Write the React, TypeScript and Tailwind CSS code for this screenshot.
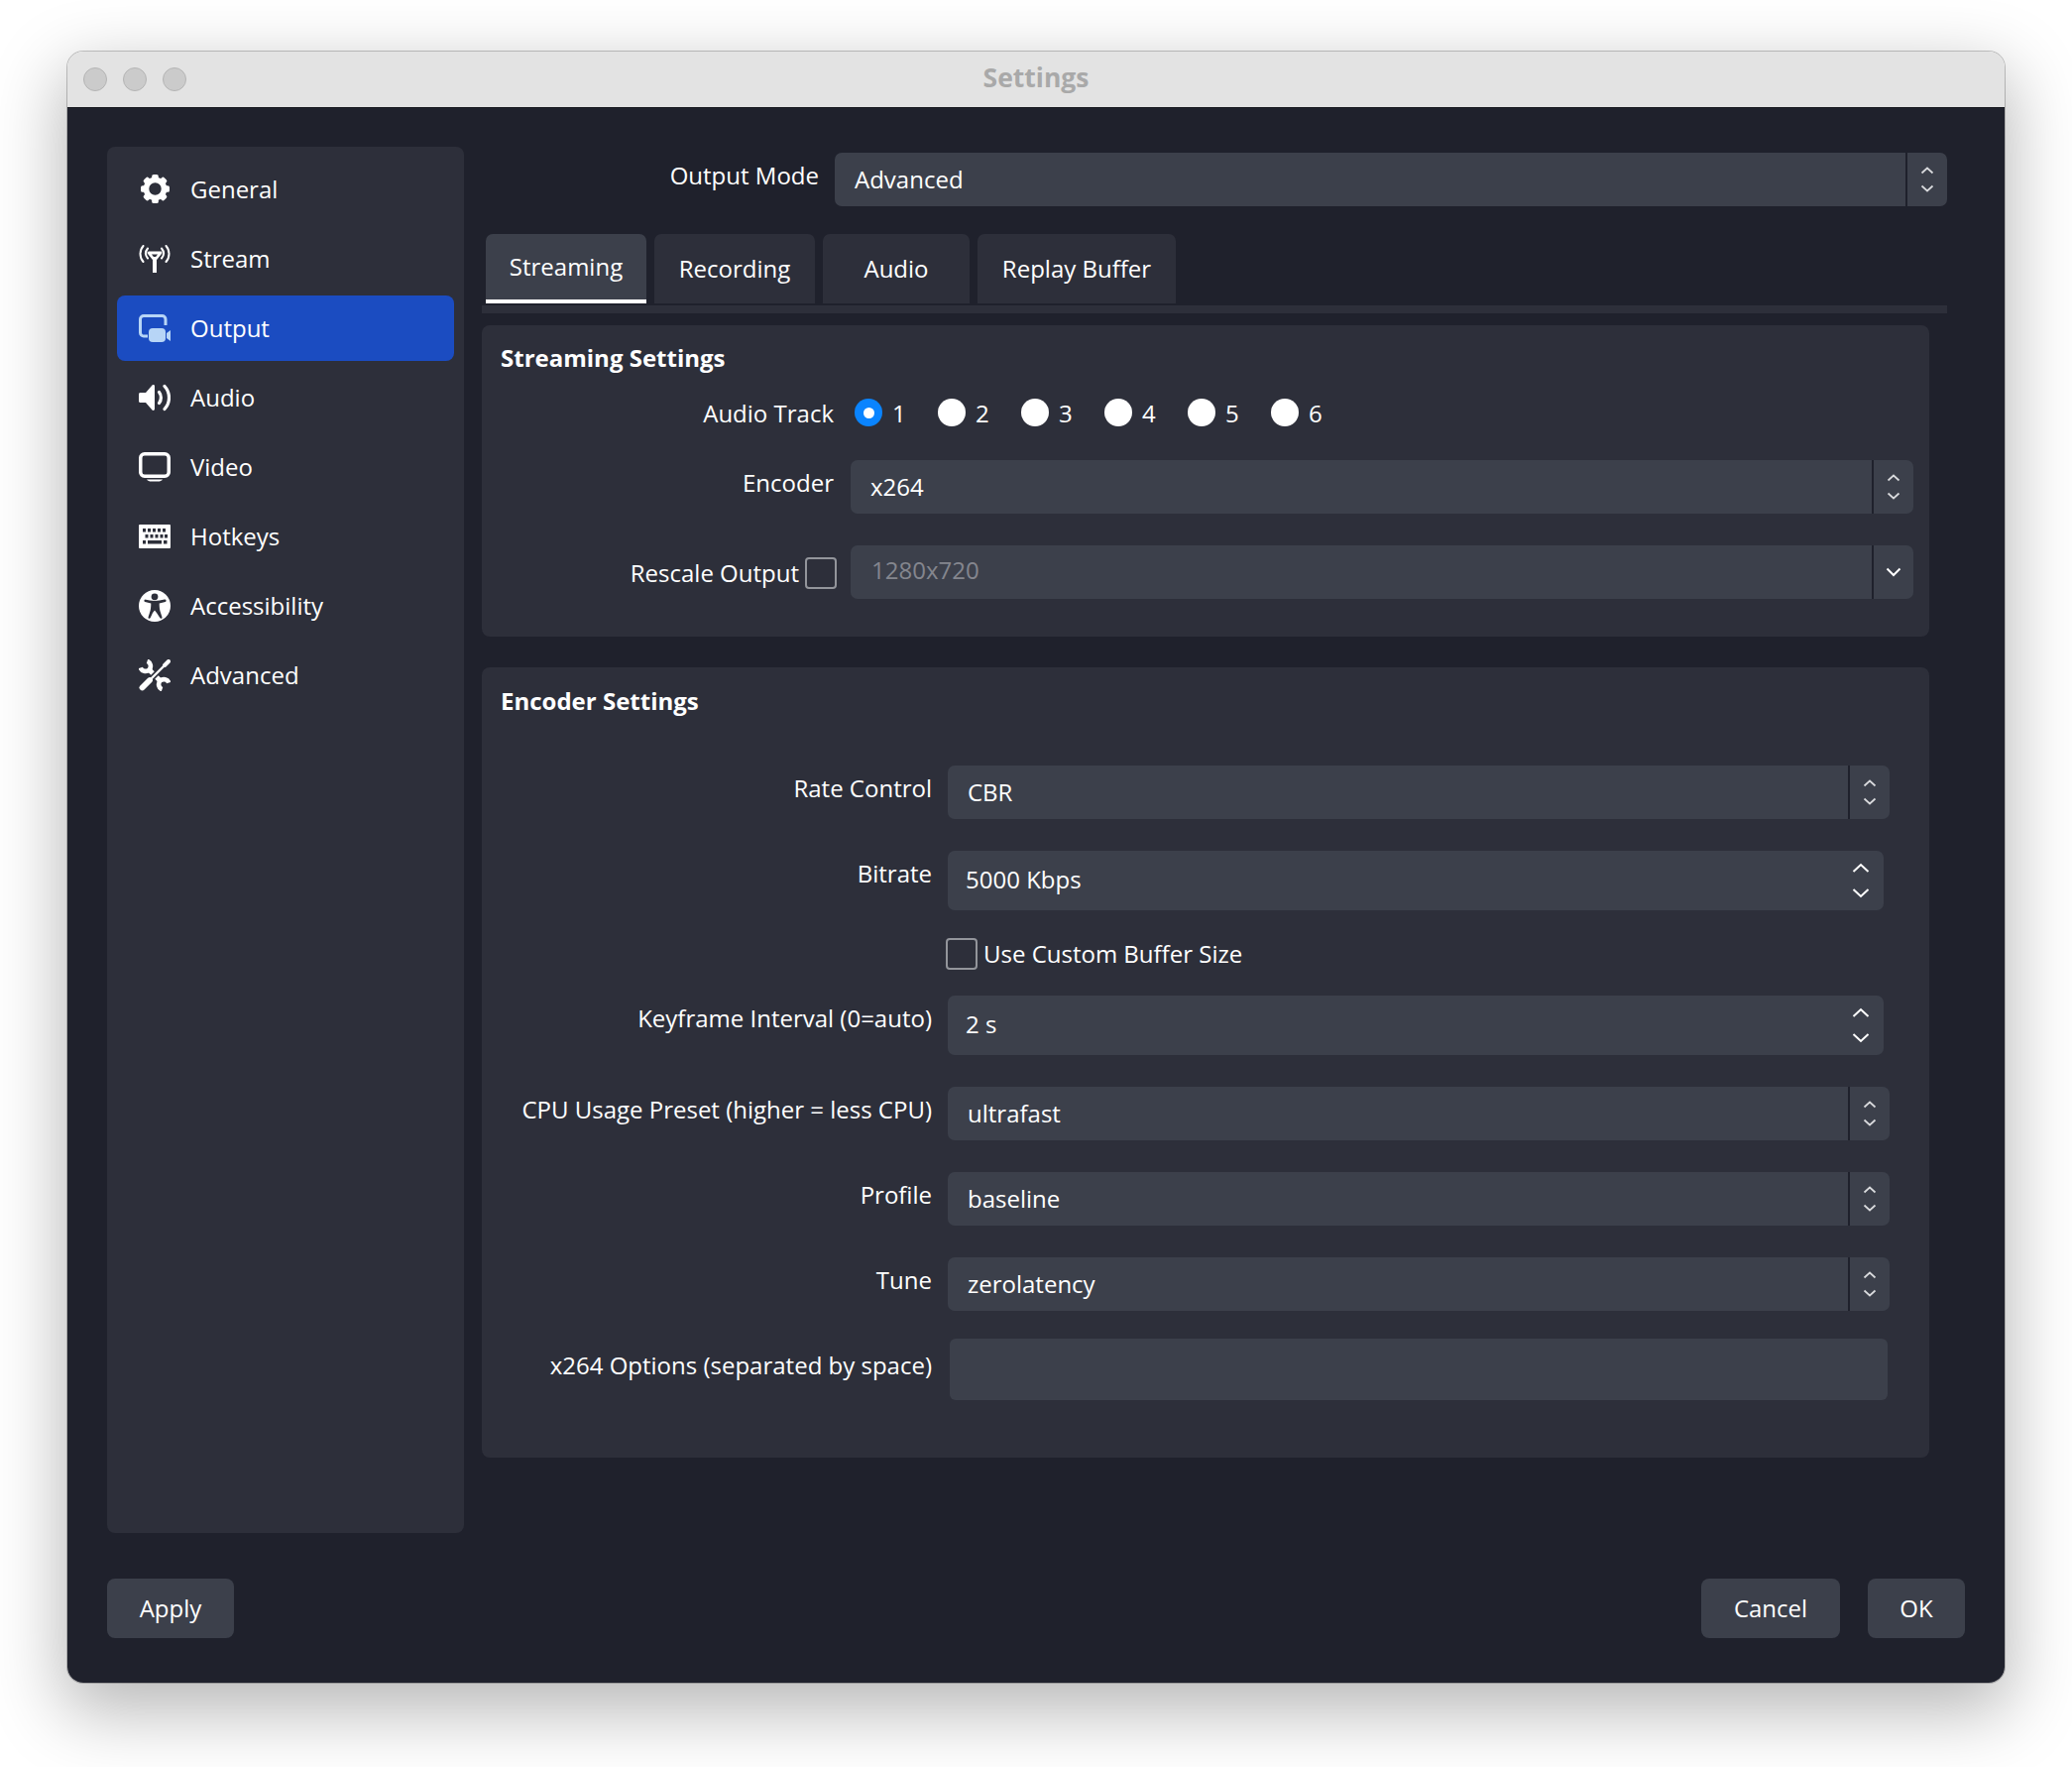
import React from "react";

const Updown = () => (
  <svg width="14" height="28" viewBox="0 0 14 28" fill="none" stroke="#d9dadd" strokeWidth="1.7">
    <path d="M1.5 7.5 7 2.5l5.5 5" />
    <path d="M1.5 20.5 7 25.5l5.5-5" />
  </svg>
);
const Down = () => (
  <svg width="16" height="10" viewBox="0 0 16 10" fill="none" stroke="#ffffff" strokeWidth="2">
    <path d="M1.5 1.5 8 8l6.5-6.5" />
  </svg>
);
const Spin = () => (
  <svg width="18" height="36" viewBox="0 0 18 36" fill="none" stroke="#ffffff" strokeWidth="2">
    <path d="M1.5 9 9 2l7.5 7" />
    <path d="M1.5 27 9 34l7.5-7" />
  </svg>
);

function Select({ text, kind = "updown", muted = false }: { text: string; kind?: "updown" | "down"; muted?: boolean }) {
  return (
    <div className="flex h-[54px] flex-1 overflow-hidden rounded-[7px] bg-[#3c404b]">
      <div className={muted ? "flex flex-1 items-center pb-[4px] pl-[21px] text-[#84868e]" : "flex flex-1 items-center pl-[20px] text-white"}>
        {text}
      </div>
      <div className="w-[2px] bg-[#1f212c]" />
      <div className="flex w-[40px] items-center justify-center">{kind === "updown" ? <Updown /> : <Down />}</div>
    </div>
  );
}

function SpinBox({ text }: { text: string }) {
  return (
    <div className="flex h-[60px] w-[944px] items-center justify-between rounded-[7px] bg-[#3c404b] pl-[18px] pr-[14px] text-white">
      <span className="pb-[2px]">{text}</span>
      <Spin />
    </div>
  );
}

const Check = () => <div className="h-[32px] w-[32px] shrink-0 rounded-[4px] border-2 border-[#93959b]" />;

function EncRow({
  label,
  className,
  labelClass = "pt-[6px]",
  children,
}: {
  label: string;
  className: string;
  labelClass?: string;
  children: React.ReactNode;
}) {
  return (
    <div className={"flex gap-[16px] " + className}>
      <div className={"w-[454px] shrink-0 text-right " + labelClass}>{label}</div>
      <div className="flex w-[950px]">{children}</div>
    </div>
  );
}

const Gear = () => (
  <svg width="29" height="29" viewBox="0 0 28 28" fill="#fff">
    <circle cx="14" cy="14" r="8.700" fill="none" stroke="#fff" strokeWidth="5.400" />
    {[0, 45, 90, 135, 180, 225, 270, 315].map((a) => (
      <rect key={a} x="10.800" y="0" width="6.400" height="6.500" rx="1.800" transform={`rotate(${a} 14 14)`} />
    ))}
  </svg>
);
const Antenna = () => (
  <svg width="32" height="28" viewBox="0 0 32 28" fill="none" stroke="#fff">
    <path d="M4.500 1C.5 5.500.5 12.500 4.500 17" strokeWidth="2" strokeLinecap="round" />
    <path d="M27.500 1c4 4.500 4 11.500 0 16" strokeWidth="2" strokeLinecap="round" />
    <path d="M9 3.500c-2.500 3-2.500 7 0 10" strokeWidth="2" strokeLinecap="round" />
    <path d="M23 3.500c2.500 3 2.500 7 0 10" strokeWidth="2" strokeLinecap="round" />
    <path d="M10 8h12L16 15.500z" strokeWidth="2.800" strokeLinejoin="round" />
    <path d="M16 12v16" strokeWidth="4" />
  </svg>
);
const OutputIcon = () => (
  <svg width="32" height="28" viewBox="0 0 32 28" fill="none">
    <path d="M9 22H5a3.500 3.500 0 0 1-3.500-3.500V5A3.500 3.500 0 0 1 5 1.500h18.500A3.500 3.500 0 0 1 27 5v6" stroke="#b7d5f6" strokeWidth="3" />
    <rect x="10" y="14" width="17" height="14" rx="4" fill="#b7d5f6" />
    <path d="M28 19l4-3v11l-4-3z" fill="#b7d5f6" />
  </svg>
);
const Speaker = () => (
  <svg width="32" height="28" viewBox="0 0 32 28" fill="none">
    <path d="M1.500 9H7l6.500-7.500c.8-.9 2.500-.4 2.500.9v23.200c0 1.300-1.700 1.800-2.500.9L7 19H1.500C.7 19 0 18.300 0 17.500v-7C0 9.700.7 9 1.500 9z" fill="#fff" />
    <path d="M20.500 8.500c2.500 3 2.500 8 0 11" stroke="#fff" strokeWidth="3.200" strokeLinecap="round" />
    <path d="M26 2.500c6 6.500 6 16.500 0 23" stroke="#fff" strokeWidth="3.200" strokeLinecap="round" />
  </svg>
);
const Monitor = () => (
  <svg width="32" height="30" viewBox="0 0 32 30" fill="none">
    <rect x="1.750" y="1.750" width="28.500" height="22.500" rx="4" stroke="#fff" strokeWidth="3.500" />
    <path d="M8 27.500h16c-1 1.500-3 2-4 2h-8c-1 0-3-.5-4-2z" fill="#fff" />
  </svg>
);
const Keyboard = () => {
  const keys: [number, number, number][] = [
    [4, 4, 3], [9, 4, 3], [14, 4, 3], [19, 4, 3], [24, 4, 3],
    [6.5, 10, 3], [11.5, 10, 3], [16.5, 10, 3], [21.5, 10, 3], [26, 10, 3],
    [4, 16, 3], [9, 16, 14], [25, 16, 3.5],
  ];
  return (
    <svg width="32" height="24" viewBox="0 0 32 24">
      <rect width="32" height="24" rx="1" fill="#fff" />
      {keys.map(([x, y, w]) => (
        <rect key={x + "-" + y} x={x} y={y} width={w} height="3.500" fill="#2d2f3a" />
      ))}
    </svg>
  );
};
const Access = () => (
  <svg width="32" height="32" viewBox="0 0 32 32">
    <circle cx="16" cy="16" r="16" fill="#fff" />
    <circle cx="16" cy="6.800" r="3.400" fill="#2d2f3a" />
    <path d="M6 9.600c6.600 1.700 13.400 1.700 20 0 1.600-.4 2.300 2 .7 2.500-2 .6-4 1-6 1.300 0 3.500.2 6.500 1.500 10l1.300 4c.4 1.400-1.700 2-2.200.7L18 23l-2-2.500-2 2.500-2.300 5.100c-.5 1.300-2.600.7-2.200-.7l1.300-4c1.300-3.500 1.500-6.500 1.500-10-2-.3-4-.7-6-1.300-1.600-.5-.9-2.900.7-2.500z" fill="#2d2f3a" />
  </svg>
);
const Tools = () => (
  <svg width="32" height="32" viewBox="0 0 32 32" fill="none" strokeLinecap="round">
    <path d="M8.500 1.800C12 3 13 7.500 10.500 10.500 7.500 13 3 12 1.800 8.500" stroke="#fff" strokeWidth="4.600" strokeLinecap="butt" />
    <path d="M10 10l6 6" stroke="#fff" strokeWidth="5" strokeLinecap="butt" />
    <path d="M23.500 30.200c-3.500-1.200-4.500-5.700-2-8.700 3-2.500 7.500-1.500 8.700 2" stroke="#fff" strokeWidth="4.600" strokeLinecap="butt" />
    <path d="M22 22l-6-6" stroke="#fff" strokeWidth="5" strokeLinecap="butt" />
    <path d="M25 7 11 21" stroke="#2d2f3a" strokeWidth="5.600" strokeLinecap="butt" />
    <path d="M26 6 11 21" stroke="#fff" strokeWidth="2.400" />
    <path d="M26 6l4-4" stroke="#fff" strokeWidth="4" />
    <path d="M11 21 3.500 28.500" stroke="#fff" strokeWidth="5.800" />
  </svg>
);

const nav: [string, React.ReactNode][] = [
  ["General", <Gear />],
  ["Stream", <Antenna />],
  ["Output", <OutputIcon />],
  ["Audio", <Speaker />],
  ["Video", <Monitor />],
  ["Hotkeys", <Keyboard />],
  ["Accessibility", <Access />],
  ["Advanced", <Tools />],
];

const tabs = [
  { t: "Recording", w: "w-[162px]" },
  { t: "Audio", w: "w-[148px]" },
  { t: "Replay Buffer", w: "w-[200px]" },
];

export default function App() {
  return (
    <div className="h-[1782px] w-[2090px] overflow-hidden bg-white pl-[68px] pt-[52px] font-['Open_Sans',sans-serif] text-[24px] leading-[34px] text-white">
      <div className="flex h-[1645px] w-[1954px] flex-col overflow-hidden rounded-[16px] shadow-[0_0_0_1px_rgba(0,0,0,0.22),0_24px_70px_6px_rgba(0,0,0,0.28)]">
        {/* Title bar */}
        <div className="relative flex h-[57px] items-center gap-[16px] border-b border-[#17181f] bg-[#e3e3e3] pl-[16px]">
          <div className="h-[24px] w-[24px] rounded-full border border-[#b4b4b4] bg-[#cbcbcb]" />
          <div className="h-[24px] w-[24px] rounded-full border border-[#b4b4b4] bg-[#cbcbcb]" />
          <div className="h-[24px] w-[24px] rounded-full border border-[#b4b4b4] bg-[#cbcbcb]" />
          <div className="absolute inset-x-0 top-[9px] text-center text-[26.5px] font-bold text-[#a9a9a9]">Settings</div>
        </div>

        {/* Body */}
        <div className="flex flex-1 flex-col bg-[#1f212c] px-[40px] pt-[39px]">
          <div className="flex h-[1398px] gap-[18px]">
            {/* Sidebar */}
            <div className="flex w-[360px] flex-col gap-[4px] rounded-[8px] bg-[#2d2f3a] p-[10px]">
              {nav.map(([label, icon]) => (
                <div
                  key={label}
                  className={
                    label === "Output"
                      ? "flex h-[66px] items-center rounded-[8px] bg-[#1b4cc1] pb-[1px] pl-[22px]"
                      : "flex h-[66px] items-center rounded-[8px] pb-[1px] pl-[22px]"
                  }
                >
                  <div className="flex w-[32px] justify-center">{icon}</div>
                  <div className="ml-[20px]">{label}</div>
                </div>
              ))}
            </div>

            {/* Main */}
            <div className="flex w-[1478px] flex-col pt-[6px]">
              {/* Output mode */}
              <div className="flex gap-[16px]">
                <div className="w-[340px] pt-[6px] text-right">Output Mode</div>
                <Select text="Advanced" />
              </div>

              {/* Tabs */}
              <div className="ml-[4px] mt-[28px] flex gap-[8px]">
                <div className="flex h-[70px] w-[162px] items-start justify-center rounded-t-[7px] border-b-4 border-white bg-[#3c404b] pt-[16px]">
                  Streaming
                </div>
                {tabs.map((t) => (
                  <div key={t.t} className={"flex h-[70px] items-center justify-center rounded-t-[7px] bg-[#2d2f3a] " + t.w}>
                    {t.t}
                  </div>
                ))}
              </div>
              <div className="mt-[2px] h-[8px] bg-[#2d2f3a]" />

              {/* Streaming Settings */}
              <div className="mt-[12px] h-[314px] w-[1460px] rounded-[8px] bg-[#2d2f3a] pl-[19px] pt-[16px]">
                <div className="font-bold">Streaming Settings</div>
                <div className="mt-[24px] flex h-[28px]">
                  <div className="-mt-[2px] w-[336px] text-right">Audio Track</div>
                  <div className="ml-[21px] flex gap-[35px]">
                    {["1", "2", "3", "4", "5", "6"].map((n) => (
                      <div key={n} className="flex h-[28px] w-[49px] items-center gap-[10px]">
                        {n === "1" ? (
                          <div className="flex h-[28px] w-[28px] shrink-0 items-center justify-center rounded-full bg-[#0a84ff]">
                            <div className="h-[11px] w-[11px] rounded-full bg-white" />
                          </div>
                        ) : (
                          <div className="h-[28px] w-[28px] shrink-0 rounded-full bg-white" />
                        )}
                        <span className="pt-[2px]">{n}</span>
                      </div>
                    ))}
                  </div>
                </div>
                <div className="mt-[34px] flex gap-[17px]">
                  <div className="w-[336px] pt-[6px] text-right">Encoder</div>
                  <div className="flex w-[1072px]">
                    <Select text="x264" />
                  </div>
                </div>
                <div className="mt-[32px] flex gap-[14px]">
                  <div className="flex w-[339px] items-center justify-end gap-[6px] pt-[2px]">
                    <span>Rescale Output</span>
                    <Check />
                  </div>
                  <div className="flex w-[1072px]">
                    <Select text="1280x720" kind="down" muted />
                  </div>
                </div>
              </div>

              {/* Encoder Settings */}
              <div className="mt-[31px] h-[797px] w-[1460px] rounded-[8px] bg-[#2d2f3a] pt-[17px]">
                <div className="pl-[19px] font-bold">Encoder Settings</div>
                <EncRow label="Rate Control" className="mt-[48px]">
                  <Select text="CBR" />
                </EncRow>
                <EncRow label="Bitrate" className="mt-[32px]">
                  <SpinBox text="5000 Kbps" />
                </EncRow>
                <div className="mt-[29px] flex h-[30px] items-center gap-[6px] pl-[468px]">
                  <Check />
                  <span>Use Custom Buffer Size</span>
                </div>
                <EncRow label="Keyframe Interval (0=auto)" className="mt-[27px]">
                  <SpinBox text="2 s" />
                </EncRow>
                <EncRow label="CPU Usage Preset (higher = less CPU)" className="mt-[32px]">
                  <Select text="ultrafast" />
                </EncRow>
                <EncRow label="Profile" className="mt-[32px]">
                  <Select text="baseline" />
                </EncRow>
                <EncRow label="Tune" className="mt-[32px]">
                  <Select text="zerolatency" />
                </EncRow>
                <EncRow label="x264 Options (separated by space)" className="mt-[28px]" labelClass="pt-[10px]">
                  <div className="ml-[2px] h-[62px] w-[946px] rounded-[6px] bg-[#3c404b]" />
                </EncRow>
              </div>
            </div>
          </div>

          {/* Buttons */}
          <div className="mt-[46px] flex h-[60px] items-stretch">
            <div className="flex w-[128px] items-center justify-center rounded-[8px] bg-[#3c404b]">Apply</div>
            <div className="ml-auto flex w-[140px] items-center justify-center rounded-[8px] bg-[#3c404b]">Cancel</div>
            <div className="ml-[28px] flex w-[98px] items-center justify-center rounded-[8px] bg-[#3c404b]">OK</div>
          </div>
        </div>
      </div>
    </div>
  );
}
